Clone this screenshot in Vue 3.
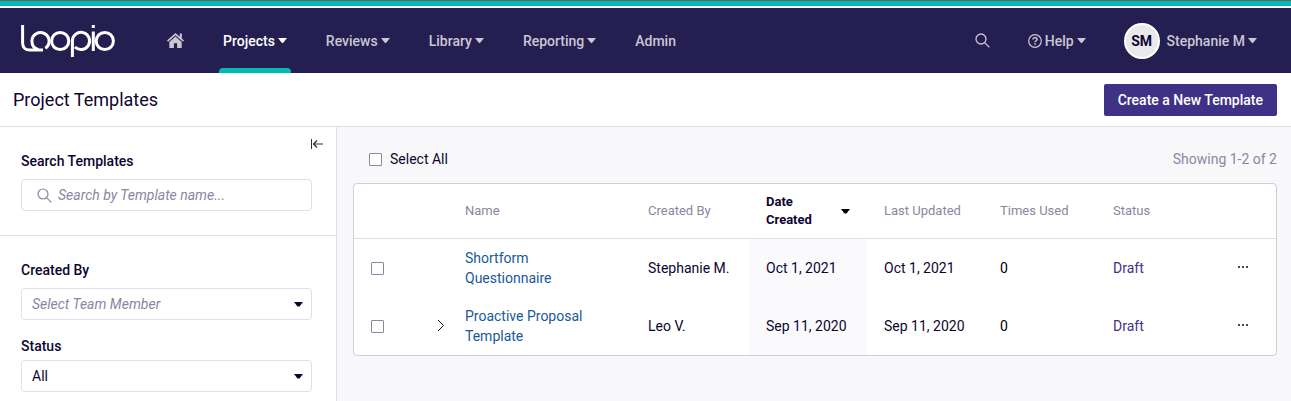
<script setup>
import { ref, computed } from 'vue'

const menu = [
  { label: 'Projects', active: true, caret: true },
  { label: 'Reviews', caret: true },
  { label: 'Library', caret: true },
  { label: 'Reporting', caret: true },
  { label: 'Admin' },
]

const templates = [
  { id: 1, name: 'Shortform Questionnaire', author: 'Stephanie M.', created: 'Oct 1, 2021', updated: 'Oct 1, 2021', used: 0, status: 'Draft' },
  { id: 2, name: 'Proactive Proposal Template', author: 'Leo V.', created: 'Sep 11, 2020', updated: 'Sep 11, 2020', used: 0, status: 'Draft', children: true },
]

const search = ref('')
const member = ref('')
const status = ref('all')
const selected = ref([])

const allSelected = computed({
  get: () => selected.value.length === templates.length,
  set: (on) => {
    selected.value = on ? templates.map((t) => t.id) : []
  },
})
</script>

<template>
  <div class="page">
    <div class="strip"></div>

    <header class="topbar">
      <a href="#" class="logo" aria-label="Loopio">
        <svg width="96" height="34" viewBox="20 24 96 34" fill="none" stroke="#fff" stroke-width="3">
          <path d="M22.600 25v18c0 4.500 3 7 7 7H43" />
          <path d="M45.300 48.300A8.600 8.600 0 1 0 31.900 41c0 4 2.500 7.500 6.500 8.600" />
          <circle cx="60.200" cy="41" r="8.600" />
          <path d="M72.400 57V41a8.600 8.600 0 1 1 2.500 6" />
          <path d="M93.300 31.500v19.500M93.300 25v3" />
          <circle cx="104.800" cy="41" r="8.600" />
        </svg>
      </a>

      <nav class="menu">
        <a href="#" class="menu-item" aria-label="Home">
          <svg width="17" height="15" viewBox="0 0 16 14" fill="currentColor">
            <path d="M8 0 0 7l1 1.100L8 2l7 6.100L16 7l-2-1.800V.5h-2v3z" />
            <path d="M8 3.300 2.200 8.300V14H6.500V9.500h3V14h4.300V8.300z" />
          </svg>
        </a>
        <a v-for="item in menu" :key="item.label" href="#" class="menu-item" :class="{ active: item.active }">
          {{ item.label }}
          <svg v-if="item.caret" class="caret" width="9" height="5" viewBox="0 0 9 5"><path d="M0 0h9L5 5H4z" /></svg>
        </a>
      </nav>

      <div class="tools">
        <button type="button" class="plain" aria-label="Search">
          <svg width="15" height="15" viewBox="0 0 15 15" fill="none" stroke="currentColor" stroke-width="1.300">
            <circle cx="6" cy="6" r="5" />
            <path d="m9.600 9.600 4.700 4.700" />
          </svg>
        </button>
        <button type="button" class="plain">
          <svg width="14" height="14" viewBox="0 0 14 14" fill="none" stroke="currentColor" stroke-width="1.200">
            <circle cx="7" cy="7" r="6.300" />
            <path d="M5 5.600C5 3 9 3 9 5.400 9 6.800 7 6.700 7 8.300M7 9.300v1.500" stroke-width="1.500" />
          </svg>
          Help
          <svg class="caret" width="9" height="5" viewBox="0 0 9 5"><path d="M0 0h9L5 5H4z" /></svg>
        </button>
        <button type="button" class="plain">
          <span class="avatar">SM</span>
          Stephanie M
          <svg class="caret" width="9" height="5" viewBox="0 0 9 5"><path d="M0 0h9L5 5H4z" /></svg>
        </button>
      </div>
    </header>

    <div class="titlebar">
      <h1>Project Templates</h1>
      <button type="button" class="primary">Create a New Template</button>
    </div>

    <div class="body">
      <aside class="sidebar">
        <section class="search-section">
          <button type="button" class="collapse" aria-label="Collapse filters">
            <svg width="12" height="12" viewBox="0 0 12 12" fill="none" stroke="currentColor">
              <path d="M.5 1v10" />
              <path d="M12 6H3M6 2.500 2.500 6 6 9.500" stroke-width="1.200" />
            </svg>
          </button>
          <label for="search">Search Templates</label>
          <div class="field search-field">
            <svg width="15" height="15" viewBox="0 0 15 15" fill="none" stroke="currentColor" stroke-width="1.200">
              <circle cx="6" cy="6" r="5" />
              <path d="m9.600 9.600 4.700 4.700" />
            </svg>
            <input id="search" v-model="search" type="text" placeholder="Search by Template name..." />
          </div>
        </section>

        <section class="filters">
          <label for="member">Created By</label>
          <div class="field member-field">
            <select id="member" v-model="member" :class="{ empty: !member }">
              <option value="">Select Team Member</option>
              <option value="sm">Stephanie M.</option>
              <option value="lv">Leo V.</option>
            </select>
            <svg class="arrow" width="9" height="5" viewBox="0 0 9 5"><path d="M0 0h9L5.500 4.500h-2z" /></svg>
          </div>
          <label for="status">Status</label>
          <div class="field status-field">
            <select id="status" v-model="status">
              <option value="all">All</option>
              <option value="draft">Draft</option>
            </select>
            <svg class="arrow" width="9" height="5" viewBox="0 0 9 5"><path d="M0 0h9L5.500 4.500h-2z" /></svg>
          </div>
        </section>
      </aside>

      <main class="content">
        <div class="list-head">
          <label class="select-all">
            <input v-model="allSelected" type="checkbox" />
            Select All
          </label>
          <span class="count">Showing 1-2 of 2</span>
        </div>

        <div class="card">
          <table>
            <colgroup>
              <col class="c-check" />
              <col class="c-expand" />
              <col class="c-name" />
              <col class="c-author" />
              <col class="c-created" />
              <col class="c-updated" />
              <col class="c-used" />
              <col class="c-status" />
              <col class="c-more" />
            </colgroup>
            <thead>
              <tr>
                <th></th>
                <th></th>
                <th>Name</th>
                <th>Created By</th>
                <th>
                  <button type="button" class="sort">
                    <span>Date Created</span>
                    <svg width="9" height="5" viewBox="0 0 9 5"><path d="M0 0h9L5.500 4.500h-2z" /></svg>
                  </button>
                </th>
                <th>Last Updated</th>
                <th>Times Used</th>
                <th>Status</th>
                <th></th>
              </tr>
            </thead>
            <tbody>
              <tr v-for="t in templates" :key="t.id">
                <td><input v-model="selected" type="checkbox" :value="t.id" :aria-label="t.name" /></td>
                <td class="expand">
                  <button v-if="t.children" type="button" class="icon-btn" aria-label="Expand">
                    <svg width="8" height="14" viewBox="0 0 8 14" fill="none" stroke="currentColor">
                      <path d="m1 1 5.500 5.500L1 12" />
                    </svg>
                  </button>
                </td>
                <td><a href="#" class="name">{{ t.name }}</a></td>
                <td>{{ t.author }}</td>
                <td class="shaded">{{ t.created }}</td>
                <td>{{ t.updated }}</td>
                <td class="used">{{ t.used }}</td>
                <td class="status">{{ t.status }}</td>
                <td>
                  <button type="button" class="icon-btn" aria-label="More actions">
                    <svg width="10" height="4" viewBox="0 0 10 4" fill="currentColor">
                      <circle cx="1" cy="1" r="1" />
                      <circle cx="5" cy="1" r="1" />
                      <circle cx="9" cy="1" r="1" />
                    </svg>
                  </button>
                </td>
              </tr>
            </tbody>
          </table>
        </div>
      </main>
    </div>
  </div>
</template>

<style>
body {
  margin: 0;
  background: #f8f8fb;
}
</style>

<style scoped>
.page {
  display: flex;
  flex-direction: column;
  min-height: 100vh;
  font-family: Roboto, "Liberation Sans", sans-serif;
  font-size: 14px;
  line-height: 20px;
  color: #0d0530;
}

.page * {
  box-sizing: border-box;
}

button,
input,
select {
  font: inherit;
  color: inherit;
}

a {
  text-decoration: none;
}

svg {
  display: block;
  flex-shrink: 0;
}

.strip {
  height: 8px;
  border-top: 1px solid #6b5f62;
  border-bottom: 2px solid #fff;
  background: #00bab3;
}

.topbar {
  display: flex;
  align-items: center;
  height: 65px;
  padding: 0 34px 0 20px;
  background: #251e50;
  color: #c9c7d3;
  font-weight: 500;
}

.menu {
  display: flex;
  align-self: stretch;
  gap: 31px;
  margin-left: 47px;
}

.menu-item {
  display: flex;
  align-items: center;
  gap: 3px;
  padding: 0 4px;
  color: inherit;
}

.active {
  position: relative;
  color: #fff;
}

.active::after {
  content: "";
  position: absolute;
  inset: auto 0 0;
  height: 5px;
  border-radius: 4px 4px 0 0;
  background: #00bab3;
}

.caret {
  fill: currentColor;
}

.tools {
  display: flex;
  align-items: center;
  gap: 38px;
  margin-left: auto;
}

.plain {
  display: flex;
  align-items: center;
  gap: 3px;
  padding: 0;
  border: 0;
  background: none;
  cursor: pointer;
}

.avatar {
  display: flex;
  align-items: center;
  justify-content: center;
  width: 36px;
  height: 36px;
  margin-right: 4px;
  border: 2px solid #fff;
  border-radius: 50%;
  background: #e9e8ed;
  color: #0d0530;
  font-weight: 700;
}

.titlebar {
  display: flex;
  align-items: center;
  justify-content: space-between;
  height: 54px;
  padding: 0 14px 0 13px;
  border-bottom: 1px solid #dfdeea;
  background: #fff;
}

h1 {
  margin: 0;
  font-size: 18px;
  font-weight: 400;
}

.primary {
  height: 32px;
  padding: 0 14px;
  border: 0;
  border-radius: 2px;
  background: #3f3286;
  color: #fff;
  font-weight: 500;
  cursor: pointer;
}

.body {
  display: flex;
  flex: 1;
}

.sidebar {
  flex: 0 0 337px;
  border-right: 1px solid #dfdeea;
  background: #fff;
}

.sidebar label {
  display: block;
  font-weight: 500;
}

.search-section {
  position: relative;
  padding: 24px 24px 24px 21px;
  border-bottom: 1px solid #dfdeea;
}

.collapse {
  position: absolute;
  top: 11px;
  right: 13px;
  padding: 0;
  border: 0;
  background: none;
  color: #333;
  cursor: pointer;
}

.field {
  position: relative;
  display: flex;
  align-items: center;
  height: 32px;
  border: 1px solid #dfdeea;
  border-radius: 4px;
}

.search-field {
  gap: 6px;
  margin-top: 8px;
  padding-left: 15px;
  color: #8a86a3;
}

.search-field input {
  flex: 1;
  min-width: 0;
  padding: 0;
  border: 0;
  outline: 0;
  background: none;
  color: #0d0530;
}

.search-field input::placeholder {
  color: #8a86a3;
  font-style: italic;
  opacity: 1;
}

.filters {
  padding: 24px 24px 8px 21px;
}

.member-field {
  margin: 8px 0 16px;
}

.status-field {
  margin-top: 4px;
}

select {
  width: 100%;
  height: 30px;
  padding: 0 10px;
  border: 0;
  outline: 0;
  background: none;
  appearance: none;
}

select.empty {
  color: #8a86a3;
  font-style: italic;
}

.arrow {
  position: absolute;
  right: 8px;
  pointer-events: none;
  fill: #0d0530;
}

.content {
  flex: 1;
  min-width: 0;
  padding: 22px 14px 22px 16px;
}

.list-head {
  display: flex;
  align-items: center;
  justify-content: space-between;
  margin-bottom: 14px;
  padding-left: 16px;
}

.select-all {
  display: flex;
  align-items: center;
  gap: 8px;
}

.count {
  color: #8a86a3;
}

input[type="checkbox"] {
  display: block;
  width: 13px;
  height: 13px;
  margin: 0;
  border: 1px solid #8a86a3;
  border-radius: 1px;
  background: #fff;
  appearance: none;
}

input[type="checkbox"]:checked {
  background: #3f3286;
}

.card {
  overflow: hidden;
  border: 1px solid #cfcdda;
  border-radius: 4px;
  background: #fff;
}

table {
  width: 100%;
  border-collapse: separate;
  border-spacing: 0;
  table-layout: fixed;
}

.c-check { width: 70px; }
.c-expand { width: 24px; }
.c-name { width: 183px; }
.c-author { width: 118px; }
.c-created { width: 118px; }
.c-updated { width: 116px; }
.c-used { width: 113px; }
.c-status { width: 125px; }
.c-more { width: 55px; }

th,
td {
  padding: 0 17px;
  text-align: left;
}

th {
  height: 55px;
  border-bottom: 1px solid #dfdeea;
  color: #8a86a3;
  font-size: 13px;
  font-weight: 400;
  line-height: 18px;
  white-space: nowrap;
}

.sort {
  display: flex;
  align-items: center;
  justify-content: space-between;
  width: 100%;
  padding: 0;
  border: 0;
  background: none;
  color: #0d0530;
  font-weight: 700;
  text-align: left;
  white-space: normal;
}

.sort span {
  width: min-content;
}

td {
  height: 58px;
}

td.expand {
  padding: 0 0 0 13px;
}

.icon-btn {
  display: block;
  padding: 0;
  border: 0;
  background: none;
  color: #111;
  cursor: pointer;
}

.name {
  color: #18599a;
}

.shaded {
  background: #fafafd;
}

.used {
  color: #000;
}

.status {
  color: #3f3286;
}
</style>
